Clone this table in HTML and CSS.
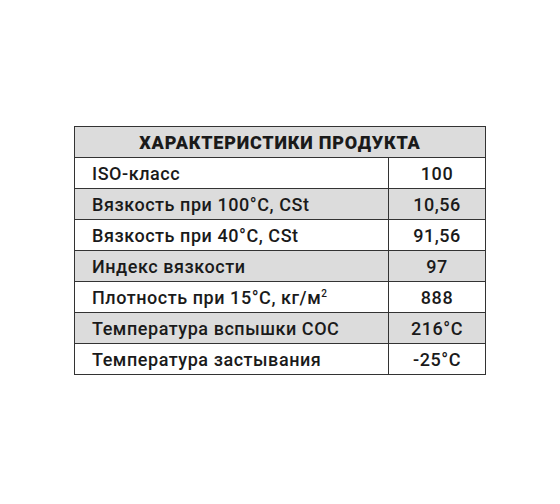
FILE: index.html
```html
<!DOCTYPE html>
<html lang="ru">
<head>
<meta charset="utf-8">
<title>Характеристики продукта</title>
<link rel="stylesheet" href="styles.css">
</head>
<body>
<div class="page">
  <table class="specs">
    <colgroup>
      <col class="col-name">
      <col class="col-val">
    </colgroup>
    <thead>
      <tr><th colspan="2" class="title">ХАРАКТЕРИСТИКИ ПРОДУКТА</th></tr>
    </thead>
    <tbody>
      <tr><td class="name">ISO-класс</td><td class="val">100</td></tr>
      <tr class="alt"><td class="name">Вязкость при 100°C, CSt</td><td class="val">10,56</td></tr>
      <tr><td class="name">Вязкость при 40°C, CSt</td><td class="val">91,56</td></tr>
      <tr class="alt"><td class="name">Индекс вязкости</td><td class="val">97</td></tr>
      <tr><td class="name">Плотность при 15°C, кг/м<sup class="sup">2</sup></td><td class="val">888</td></tr>
      <tr class="alt"><td class="name">Температура вспышки СОС</td><td class="val">216°C</td></tr>
      <tr><td class="name">Температура застывания</td><td class="val">-25°C</td></tr>
    </tbody>
  </table>
</div>
</body>
</html>
```
FILE: styles.css
```css
html, body {
  margin: 0;
  padding: 0;
  background: #ffffff;
}
.page {
  padding: 126px 0 0 74px;
}
.specs {
  border-collapse: collapse;
  width: 411px;
  table-layout: fixed;
  font-family: Roboto, "DejaVu Sans", sans-serif;
  color: #1a1a1a;
  border: 1px solid #333333;
}
.col-name {
  width: 314px;
}
.col-val {
  width: 97px;
}
.specs th,
.specs td {
  border: 1px solid #333333;
  height: 31px;
  padding: 2px 0 0 0;
  box-sizing: border-box;
  font-size: 18px;
  line-height: 20px;
  vertical-align: middle;
  white-space: nowrap;
}
.title {
  background: #dcdcdc;
  font-weight: 900;
  letter-spacing: 0.8px;
  text-align: center;
}
.name {
  padding-left: 17px !important;
  font-weight: 500;
  letter-spacing: 0.55px;
  text-align: left;
}
.val {
  font-weight: 500;
  letter-spacing: 0.55px;
  text-align: center;
}
.alt td {
  background: #dcdcdc;
}
.sup {
  font-size: 10px;
  line-height: 0;
  vertical-align: 7px;
}
```
